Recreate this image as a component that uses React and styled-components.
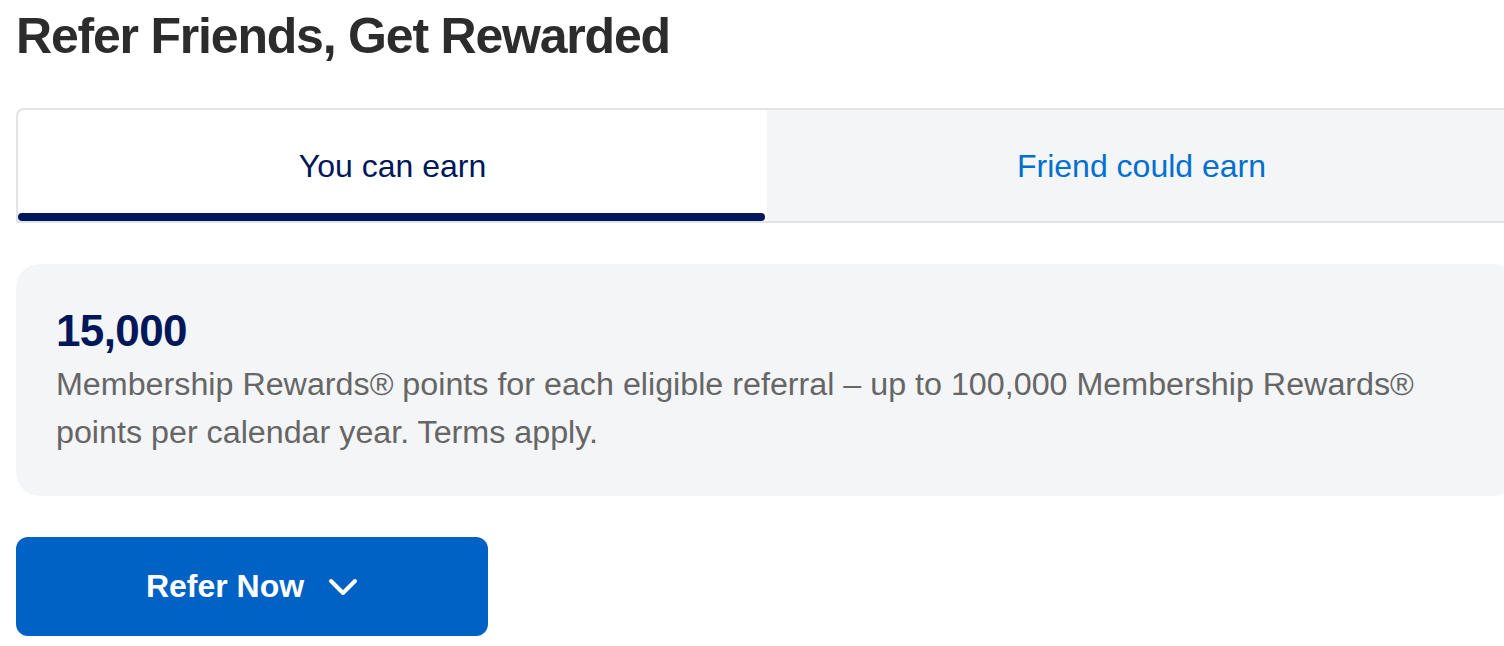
import styled, { createGlobalStyle } from 'styled-components';

const GlobalStyle = createGlobalStyle`
  html, body {
    margin: 0;
    padding: 0;
    overflow: hidden;
    background: #ffffff;
    font-family: "Liberation Sans", Arial, Helvetica, sans-serif;
  }
`;

const Page = styled.div`
  width: 1500px;
  padding: 0 16px;
`;

const Title = styled.h1`
  margin: 7px 0 43px;
  font-size: 50px;
  line-height: 58px;
  font-weight: 700;
  letter-spacing: -1.2px;
  color: #2c2c2c;
`;

const TabList = styled.div`
  display: flex;
  border-top: 2px solid #e2e3e5;
  border-left: 2px solid #e2e3e5;
  border-bottom: 2px solid #e2e3e5;
  border-radius: 8px 0 0 0;
  overflow: hidden;
`;

const Tab = styled.div`
  flex: 1;
  height: 111px;
  display: flex;
  flex-direction: column;
  background: ${p => (p.$active ? '#ffffff' : '#f4f5f7')};
  border-radius: ${p => (p.$active ? '8px 8px 0 0' : '0')};
`;

const TabLabel = styled.div`
  flex: 1;
  display: flex;
  align-items: center;
  justify-content: center;
  padding-top: 9px;
  font-size: 32px;
  color: ${p => (p.$active ? '#00175a' : '#006fcf')};
`;

const TabBar = styled.div`
  height: 8px;
  margin-right: 2px;
  border-radius: 4px;
  background: ${p => (p.$active ? '#00175a' : 'transparent')};
`;

const Card = styled.div`
  margin-top: 41px;
  background: #f4f5f7;
  border-radius: 24px;
  padding: 43px 40px 40px;
`;

const Amount = styled.div`
  font-size: 44px;
  line-height: 48px;
  font-weight: 700;
  letter-spacing: -0.6px;
  color: #00175a;
`;

const Description = styled.p`
  margin: 5px 0 0;
  font-size: 32.25px;
  line-height: 48px;
  color: #666666;
`;

const Button = styled.button`
  margin-top: 41px;
  width: 472px;
  height: 99px;
  border: none;
  border-radius: 12px;
  background: #0062c5;
  color: #ffffff;
  display: flex;
  align-items: center;
  justify-content: center;
  gap: 24px;
  font-family: "Liberation Sans", Arial, sans-serif;
  font-size: 32px;
  font-weight: 700;
  cursor: pointer;
`;

const Chevron = () => (
  <svg width="30" height="18" viewBox="0 0 30 18" fill="none">
    <polyline points="3,3 15,15 27,3" stroke="#ffffff" strokeWidth="4" strokeLinecap="round" strokeLinejoin="round" />
  </svg>
);

export default function App() {
  return (
    <>
      <GlobalStyle />
      <Page>
        <Title>Refer Friends, Get Rewarded</Title>
        <TabList>
          <Tab $active>
            <TabLabel $active>You can earn</TabLabel>
            <TabBar $active />
          </Tab>
          <Tab>
            <TabLabel>Friend could earn</TabLabel>
            <TabBar />
          </Tab>
        </TabList>
        <Card>
          <Amount>15,000</Amount>
          <Description>
            Membership Rewards® points for each eligible referral – up to 100,000 Membership Rewards®
            <br />
            points per calendar year. Terms apply.
          </Description>
        </Card>
        <Button>
          Refer Now
          <Chevron />
        </Button>
      </Page>
    </>
  );
}
